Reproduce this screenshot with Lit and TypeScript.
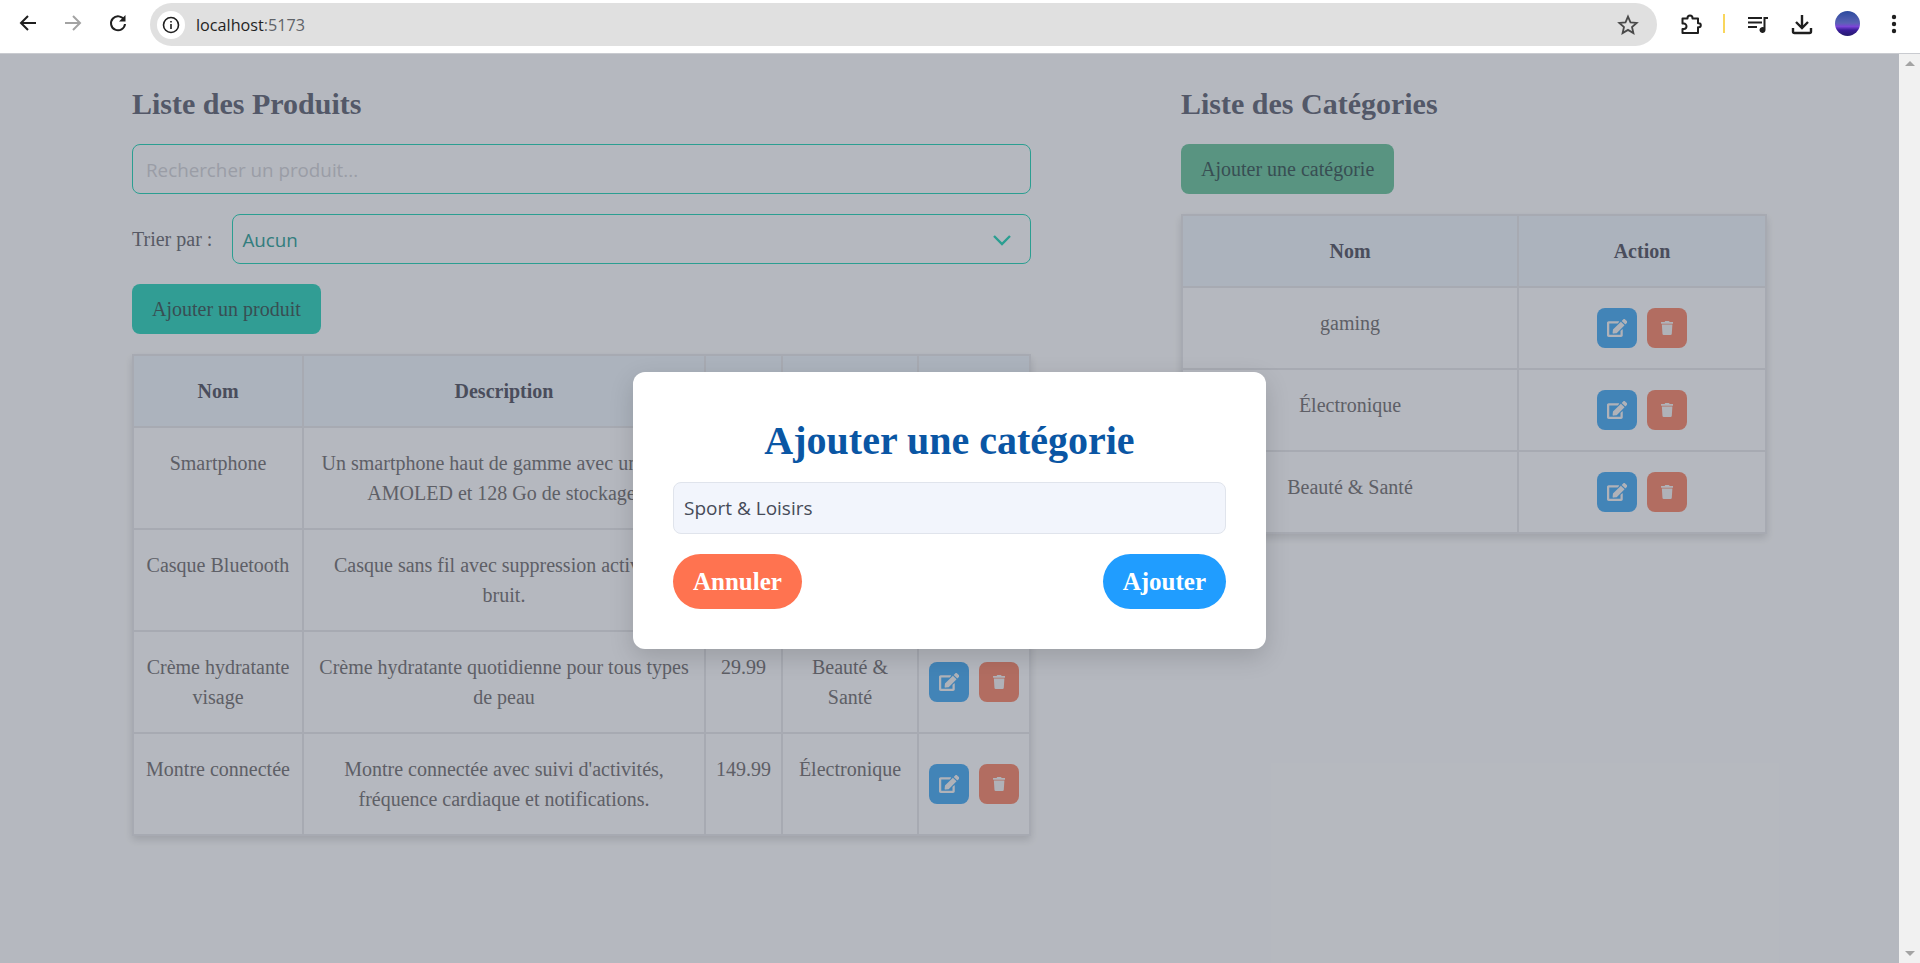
import { LitElement, html, css, svg } from "lit";
import { customElement } from "lit/decorators.js";

type Product = {
  name: string;
  description: string;
  price: string;
  category: string;
};

const PRODUCTS: Product[] = [
  {
    name: "Smartphone",
    description: "Un smartphone haut de gamme avec un écran AMOLED et 128 Go de stockage.",
    price: "699.99",
    category: "Électronique",
  },
  {
    name: "Casque Bluetooth",
    description: "Casque sans fil avec suppression active du bruit.",
    price: "89.99",
    category: "Électronique",
  },
  {
    name: "Crème hydratante visage",
    description: "Crème hydratante quotidienne pour tous types de peau",
    price: "29.99",
    category: "Beauté & Santé",
  },
  {
    name: "Montre connectée",
    description: "Montre connectée avec suivi d'activités, fréquence cardiaque et notifications.",
    price: "149.99",
    category: "Électronique",
  },
];

const CATEGORIES = ["gaming", "Électronique", "Beauté & Santé"];

const editIcon = svg`<svg class="fa" viewBox="0 0 576 512"><path fill="currentColor" d="M402.6 83.2l90.2 90.2c3.8 3.8 3.8 10 0 13.8L274.4 405.6l-92.8 10.3c-12.4 1.4-22.9-9.1-21.5-21.5l10.3-92.8L388.8 83.2c3.8-3.8 10-3.8 13.8 0zm162-22.9l-48.8-48.8c-15.2-15.2-39.9-15.2-55.2 0l-35.4 35.4c-3.8 3.8-3.8 10 0 13.8l90.2 90.2c3.8 3.8 10 3.8 13.8 0l35.4-35.4c15.2-15.3 15.2-40 0-55.2zM384 346.2V448H64V128h229.8c3.2 0 6.2-1.3 8.5-3.5l40-40c7.6-7.6 2.2-20.5-8.5-20.5H48C21.5 64 0 85.5 0 112v352c0 26.5 21.5 48 48 48h352c26.5 0 48-21.5 48-48V306.2c0-10.7-12.9-16-20.5-8.5l-40 40c-2.2 2.3-3.5 5.3-3.5 8.5z"/></svg>`;
const trashIcon = svg`<svg class="fa trash" viewBox="0 0 448 512"><path fill="currentColor" d="M432 32H312l-9.4-18.7A24 24 0 0 0 281.1 0H166.8a23.72 23.72 0 0 0-21.4 13.3L136 32H16A16 16 0 0 0 0 48v32a16 16 0 0 0 16 16h416a16 16 0 0 0 16-16V48a16 16 0 0 0-16-16zM53.2 467a48 48 0 0 0 47.9 45h245.8a48 48 0 0 0 47.9-45L416 128H32z"/></svg>`;

const actions = html`<div class="actions">
  <button class="icon-btn edit">${editIcon}</button>
  <button class="icon-btn del">${trashIcon}</button>
</div>`;

@customElement("app-root")
export class AppRoot extends LitElement {
  static override styles = css`
    :host {
      display: flex;
      flex-direction: column;
      height: 100vh;
      overflow: hidden;
      font-family: "Liberation Serif", "Times New Roman", serif;
    }

    /* browser chrome */
    .toolbar {
      flex: none;
      height: 53px;
      background: #fff;
      border-bottom: 1px solid #c9cbd0;
      display: flex;
      align-items: flex-start;
      color: #1f1f1f;
      font-family: "Open Sans", sans-serif;
    }
    .tb-icon {
      flex: none;
      width: 24px;
      height: 24px;
      display: block;
    }
    .nav {
      display: flex;
      gap: 21px;
      padding: 11px 0 0 16px;
      margin-right: 20px;
    }
    .omnibox {
      flex: none;
      width: 1507px;
      height: 43px;
      margin-top: 3px;
      background: #e0e0e0;
      border-radius: 22px;
      display: flex;
      align-items: center;
      padding-left: 7px;
      padding-right: 17px;
      box-sizing: border-box;
    }
    .site-info {
      width: 28px;
      height: 28px;
      border-radius: 50%;
      background: #fff;
      display: flex;
      align-items: center;
      justify-content: center;
      margin-right: 11px;
    }
    .url {
      flex: 1;
      font-size: 16.2px;
      color: #1f1f1f;
    }
    .url span {
      color: #5f6368;
    }
    .tb-right {
      display: flex;
      align-items: center;
      height: 47px;
      padding-left: 22px;
    }
    .ext-sep {
      width: 2px;
      height: 19px;
      background: #f9d65c;
      margin: 0 21px 0 20px;
    }
    .avatar {
      width: 25px;
      height: 25px;
      border-radius: 50%;
      margin: 0 31px 0 21px;
      background: linear-gradient(180deg, #2c4a9e 0%, #5a62b4 48%, #7b45d6 62%, #3a1d9a 76%, #241a6c 100%);
    }
    .dl {
      margin-left: 20px;
    }

    /* page */
    .content {
      flex: 1;
      min-height: 0;
      display: flex;
    }
    .page {
      position: relative;
      flex: 1;
      min-width: 0;
      background: #f5f9ff;
      padding: 0 132px;
      display: flex;
      justify-content: space-between;
      align-items: flex-start;
    }
    .col-products {
      width: 899px;
    }
    .col-categories {
      width: 586px;
    }
    h2 {
      margin: 0 0 22px;
      padding-top: 32px;
      font-size: 30px;
      line-height: 36px;
      color: #70778a;
    }
    .field {
      height: 50px;
      box-sizing: border-box;
      border: 1.5px solid #3ad6c2;
      border-radius: 8px;
      background: transparent;
      display: flex;
      align-items: center;
      padding-top: 2px;
      font-family: "Open Sans", sans-serif;
      font-size: 18.8px;
    }
    .search {
      padding-left: 13px;
      color: #d0d4de;
      margin-bottom: 20px;
    }
    .sort {
      display: flex;
      align-items: center;
      gap: 20px;
      margin-bottom: 20px;
      font-size: 20px;
      color: #767a86;
    }
    .select {
      flex: 1;
      padding: 2px 18px 0 9px;
      color: #44a9a8;
      justify-content: space-between;
    }
    .chevron {
      width: 20px;
      height: 12px;
    }
    .add {
      display: inline-block;
      height: 50px;
      padding: 1px 20px 0;
      box-sizing: border-box;
      border: none;
      border-radius: 8px;
      font-family: inherit;
      font-size: 20px;
      color: #4c6a6e;
      margin-bottom: 20px;
    }
    .add-product {
      background: #43d4c6;
    }
    .add-category {
      background: #78c8ac;
    }
    table {
      width: calc(100% - 2px);
      border-collapse: collapse;
      table-layout: fixed;
      background: #f5f9ff;
      box-shadow: 0 4px 8px rgba(0, 0, 0, 0.12);
      font-size: 20px;
      line-height: 30px;
      color: #7f8188;
    }
    th,
    td {
      border: 2px solid #e2e6ee;
      padding: 20px 10px;
      text-align: center;
      vertical-align: top;
      font-weight: normal;
    }
    th {
      background: #e8f2fc;
      font-weight: bold;
      color: #65697a;
    }
    td.action {
      vertical-align: middle;
    }
    .actions {
      display: flex;
      justify-content: center;
      gap: 10px;
    }
    .icon-btn {
      flex: none;
      width: 40px;
      height: 40px;
      border: none;
      border-radius: 8px;
      padding: 0;
      color: #eef1f6;
      display: flex;
      align-items: center;
      justify-content: center;
    }
    .edit {
      background: #5ab2f5;
    }
    .del {
      background: #f09481;
    }
    .fa {
      height: 18px;
      display: block;
    }
    .fa.trash {
      height: 14px;
    }

    /* modal */
    .overlay {
      position: absolute;
      inset: 0;
      padding-top: 3px;
      box-sizing: border-box;
      background: rgba(0, 0, 8, 0.26);
      display: flex;
      align-items: center;
      justify-content: center;
    }
    .modal {
      width: 633px;
      box-sizing: border-box;
      padding: 40px;
      background: #fff;
      border-radius: 12px;
      box-shadow: 0 8px 24px rgba(0, 0, 0, 0.15);
    }
    .modal h3 {
      margin: 0 0 16px;
      padding-top: 4px;
      font-size: 40px;
      line-height: 50px;
      text-align: center;
      color: #0a56a4;
    }
    .modal-input {
      height: 52px;
      box-sizing: border-box;
      padding: 1px 0 0 10px;
      background: #f2f5fc;
      border: 1px solid #e0e4ec;
      border-radius: 8px;
      display: flex;
      align-items: center;
      font-family: "Open Sans", sans-serif;
      font-size: 19px;
      color: #464b58;
      margin-bottom: 20px;
    }
    .modal-actions {
      display: flex;
      justify-content: space-between;
    }
    .pill {
      height: 55px;
      padding: 1px 20px 0;
      border: none;
      border-radius: 28px;
      color: #fff;
      font-family: inherit;
      font-weight: bold;
      font-size: 25px;
    }
    .cancel {
      background: #ff7350;
    }
    .confirm {
      background: #209dff;
    }

    /* scrollbar */
    .scrollbar {
      flex: none;
      width: 21px;
      background: #f1f1f1;
      display: flex;
      flex-direction: column;
      justify-content: space-between;
      align-items: center;
      padding: 7px 0;
      box-sizing: border-box;
    }
    .arrow {
      width: 0;
      height: 0;
      border-left: 5px solid transparent;
      border-right: 5px solid transparent;
    }
    .arrow.up {
      border-bottom: 5px solid #a3a3a3;
    }
    .arrow.down {
      border-top: 5px solid #a3a3a3;
    }
  `;

  private renderToolbar() {
    return html`<div class="toolbar">
      <div class="nav">
        <svg class="tb-icon" viewBox="0 0 24 24"><path fill="none" stroke="#1f1f1f" stroke-width="2" d="M20 12H5.500M12 5l-7 7 7 7"/></svg>
        <svg class="tb-icon" viewBox="0 0 24 24"><path fill="none" stroke="#a3a3a3" stroke-width="2" d="M4 12h14.500M12 5l7 7-7 7"/></svg>
        <svg class="tb-icon" viewBox="0 0 24 24"><path fill="none" stroke="#1f1f1f" stroke-width="2" d="M18.200 9A7 7 0 1 0 19 13"/><path fill="#1f1f1f" d="M19.500 4v6.500H13z"/></svg>
      </div>
      <div class="omnibox">
        <div class="site-info">
          <svg width="18" height="18" viewBox="0 0 18 18"><circle cx="9" cy="9" r="7.500" fill="none" stroke="#1f1f1f" stroke-width="1.600"/><path fill="#1f1f1f" d="M8.200 8h1.600v5H8.200zM8.200 5h1.600v1.600H8.200z"/></svg>
        </div>
        <div class="url">localhost<span>:5173</span></div>
        <svg class="tb-icon" viewBox="0 0 24 24"><path fill="none" stroke="#4a4a4a" stroke-width="1.800" d="M12 3.600l2.500 5.700 6.200.6-4.700 4.100 1.400 6.100-5.400-3.200-5.400 3.200 1.400-6.100-4.700-4.100 6.200-.6z"/></svg>
      </div>
      <div class="tb-right">
        <svg class="tb-icon" viewBox="0 0 24 24"><path fill="none" stroke="#1f1f1f" stroke-width="2" stroke-linejoin="round" d="M3.500 6.500h5V6a2.500 2.500 0 0 1 5 0v.5H19v4.700h.8a2 2 0 0 1 0 4H19V21H3.500v-4h1.300a2.700 2.700 0 0 0 0-5.400H3.500z"/></svg>
        <div class="ext-sep"></div>
        <svg class="tb-icon" viewBox="0 0 24 24"><path fill="#1f1f1f" d="M2 5h14v2H2zM2 9.500h14v2H2zM2 14h9v2H2z"/><path fill="#1f1f1f" d="M17.500 5H22v2h-2.500v11a3 3 0 1 1-2-2.800z"/></svg>
        <svg class="tb-icon dl" viewBox="0 0 24 24"><path fill="none" stroke="#1f1f1f" stroke-width="2.400" d="M12 3v12M6 10l6 6 6-6"/><path fill="none" stroke="#1f1f1f" stroke-width="2.400" d="M3 16v3.500a1.500 1.500 0 0 0 1.500 1.500h15a1.500 1.500 0 0 0 1.500-1.500V16"/></svg>
        <div class="avatar"></div>
        <svg width="6" height="20" viewBox="0 0 6 20"><circle cx="3" cy="3" r="2.200" fill="#1f1f1f"/><circle cx="3" cy="10" r="2.200" fill="#1f1f1f"/><circle cx="3" cy="17" r="2.200" fill="#1f1f1f"/></svg>
      </div>
    </div>`;
  }

  private renderProducts() {
    return html`<div class="col-products">
      <h2>Liste des Produits</h2>
      <div class="field search">Rechercher un produit...</div>
      <div class="sort">
        <span>Trier par :</span>
        <div class="field select">
          <span>Aucun</span>
          <svg class="chevron" viewBox="0 0 20 12"><path fill="none" stroke="#3ad6c2" stroke-width="2.400" d="M2 2l8 8 8-8"/></svg>
        </div>
      </div>
      <button class="add add-product">Ajouter un produit</button>
      <table>
        <colgroup>
          <col style="width:170px" />
          <col style="width:402px" />
          <col style="width:77px" />
          <col style="width:136px" />
          <col style="width:112px" />
        </colgroup>
        <thead>
          <tr>
            <th>Nom</th>
            <th>Description</th>
            <th>Prix</th>
            <th>Catégorie</th>
            <th>Action</th>
          </tr>
        </thead>
        <tbody>
          ${PRODUCTS.map(
            (p) => html`<tr>
              <td>${p.name}</td>
              <td>${p.description}</td>
              <td>${p.price}</td>
              <td>${p.category}</td>
              <td class="action">${actions}</td>
            </tr>`
          )}
        </tbody>
      </table>
    </div>`;
  }

  private renderCategories() {
    return html`<div class="col-categories">
      <h2>Liste des Catégories</h2>
      <button class="add add-category">Ajouter une catégorie</button>
      <table>
        <colgroup>
          <col style="width:336px" />
          <col style="width:248px" />
        </colgroup>
        <thead>
          <tr>
            <th>Nom</th>
            <th>Action</th>
          </tr>
        </thead>
        <tbody>
          ${CATEGORIES.map(
            (c) => html`<tr>
              <td>${c}</td>
              <td class="action">${actions}</td>
            </tr>`
          )}
        </tbody>
      </table>
    </div>`;
  }

  override render() {
    return html`
      ${this.renderToolbar()}
      <div class="content">
        <div class="page">
          ${this.renderProducts()} ${this.renderCategories()}
          <div class="overlay">
            <div class="modal">
              <h3>Ajouter une catégorie</h3>
              <div class="modal-input">Sport &amp; Loisirs</div>
              <div class="modal-actions">
                <button class="pill cancel">Annuler</button>
                <button class="pill confirm">Ajouter</button>
              </div>
            </div>
          </div>
        </div>
        <div class="scrollbar">
          <div class="arrow up"></div>
          <div class="arrow down"></div>
        </div>
      </div>
    `;
  }
}

declare global {
  interface HTMLElementTagNameMap {
    "app-root": AppRoot;
  }
}
